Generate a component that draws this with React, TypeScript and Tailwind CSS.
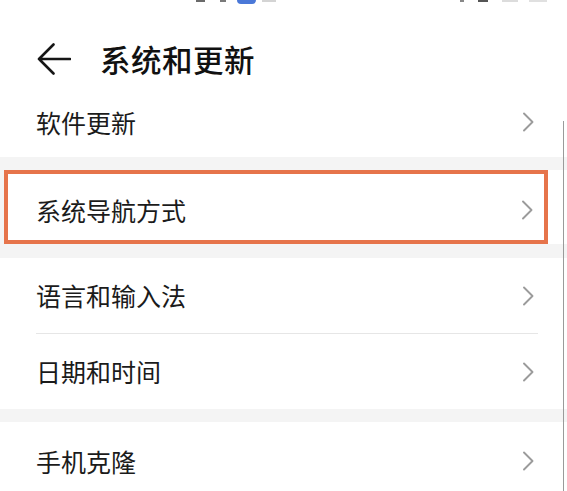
const font = { fontFamily: "'Noto Sans CJK SC', 'Noto Sans', sans-serif" }

function Chevron() {
  return (
    <svg width="12" height="20" viewBox="0 0 12 20" fill="none" aria-hidden="true">
      <path d="M2 1.5l8.5 8.5L2 18.5" stroke="#9b9b9b" strokeWidth="1.9" strokeLinecap="round" strokeLinejoin="round" />
    </svg>
  )
}

function Row({ label, className = '' }: { label: string; className?: string }) {
  return (
    <div className={`flex items-center justify-between pl-[36px] pr-[33px] bg-white ${className}`}>
      <span className="text-[25px] leading-none text-[#1b1b1b]">{label}</span>
      <Chevron />
    </div>
  )
}

export default function App() {
  return (
    <div className="relative w-[567px] h-[491px] overflow-hidden bg-white" style={font}>
      {/* Status bar, mostly cropped off */}
      <div className="flex h-[5px] items-start">
        <div className="ml-[196px] w-[9px] h-[2px] bg-[#6a6a6a]" />
        <div className="ml-[15px] w-[6px] h-[2px] bg-[#7a7a7a]" />
        <div className="ml-[11px] w-[19px] h-[4px] rounded-b-full bg-[#4a78d8]" />
        <div className="ml-[6px] w-[14px] h-[2px] bg-[#d4d4d4]" />
        <div className="ml-[184px] w-[4px] h-[2px] bg-[#888]" />
        <div className="ml-[14px] w-[10px] h-[2px] bg-[#555]" />
        <div className="ml-[14px] w-[16px] h-[2px] bg-[#dcdcdc]" />
        <div className="ml-[11px] w-[18px] h-[2px] bg-[#e0e0e0]" />
      </div>

      {/* Header */}
      <div className="flex h-[82px] items-center pt-[26px] pl-[37px]">
        <svg width="34" height="32" viewBox="0 0 34 32" fill="none" aria-hidden="true">
          <path d="M33 16H2M16.5 1.5L2 16l14.5 14.5" stroke="#161616" strokeWidth="2.6" strokeLinecap="round" strokeLinejoin="round" />
        </svg>
        <h1 className="ml-[29px] text-[30.5px] leading-none font-medium text-[#111] tracking-[0.5px]">系统和更新</h1>
      </div>

      <Row label="软件更新" className="h-[70px]" />

      {/* Highlighted group */}
      <div className="bg-[#f4f4f4] pt-[13px] pb-[14px]">
        <div className="flex h-[74px]">
          <div className="w-[4px]" />
          <div className="w-[544px] border-[4px] border-[#e6744b] bg-white flex items-center justify-between pl-[28px] pr-[11px] pt-[6px]">
            <span className="text-[25px] leading-none text-[#1b1b1b]">系统导航方式</span>
            <Chevron />
          </div>
          <div className="flex-1 bg-white" />
        </div>
      </div>

      <Row label="语言和输入法" className="h-[75px]" />
      <div className="bg-white pl-[36px] pr-[29px]">
        <div className="h-px bg-[#e6e6e6]" />
      </div>
      <Row label="日期和时间" className="h-[75px]" />

      <div className="h-[13px] bg-[#f4f4f4]" />

      <Row label="手机克隆" className="h-[78px]" />

      {/* Scrollbar */}
      <div className="absolute right-[3px] top-[121px] bottom-0 w-px bg-[#9a9a9a]" />
    </div>
  )
}
